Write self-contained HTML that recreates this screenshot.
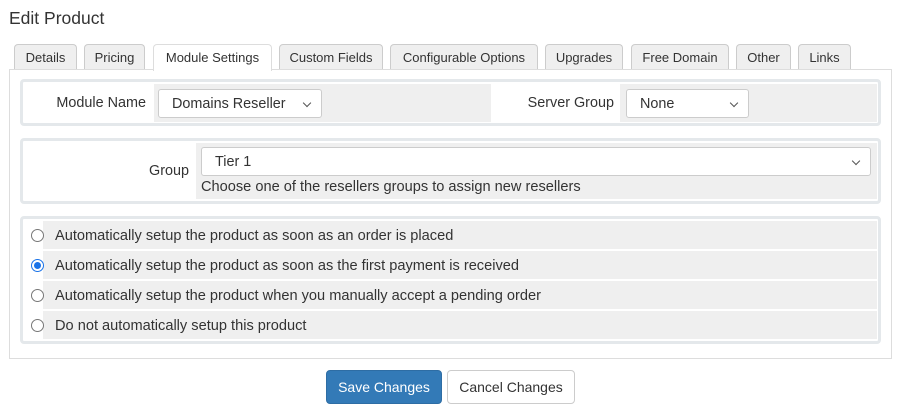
<!DOCTYPE html>
<html><head><style>
*{box-sizing:border-box}
body{margin:0;width:902px;height:417px;background:#fff;font-family:"Liberation Sans",sans-serif;font-size:14px;color:#333;position:relative;overflow:hidden}
.a{position:absolute;font-size:14.6px}
h1{position:absolute;left:9px;top:8px;margin:0;font-weight:normal;font-size:17.5px;color:#333}
.tab{position:absolute;top:44px;height:26px;background:#efefef;border:1px solid #ccc;border-bottom:none;border-radius:4px 4px 0 0;font-size:13px;text-align:center;line-height:25px;color:#333}
.tab.act{background:#fff;border-color:#ddd;height:27px;z-index:2}
.panel{position:absolute;left:9px;top:69px;width:883px;height:290px;border:1px solid #ddd}
.box{position:absolute;border:3px solid #e4e8eb;border-radius:4px;background:#fff}
.g{position:absolute;background:#efefef}
.lbl{position:absolute;text-align:right;font-size:14.4px}
.sel{position:absolute;background:#fff;border:1px solid #ccc;border-radius:3px;padding-left:13px;line-height:28px;font-size:14.4px}
.sel:after{content:"";position:absolute;right:11px;top:10px;width:5px;height:5px;border-right:1.5px solid #555;border-bottom:1.5px solid #555;transform:rotate(45deg)}
.radio{position:absolute;left:31px;width:13px;height:13px;border:1px solid #777;border-radius:50%;background:#fff}
.radio.on{border:1px solid #1a73e8}
.radio.on:after{content:"";position:absolute;left:2px;top:2px;width:7px;height:7px;border-radius:50%;background:#1a73e8}
.btn{position:absolute;top:370px;height:34px;border-radius:4px;line-height:32px;text-align:center;font-size:14px}
</style></head><body>
<h1>Edit Product</h1>
<div class="tab" style="left:14px;width:63px">Details</div>
<div class="tab" style="left:84px;width:61px">Pricing</div>
<div class="tab act" style="left:153px;width:119px">Module Settings</div>
<div class="tab" style="left:279px;width:104px">Custom Fields</div>
<div class="tab" style="left:390px;width:148px">Configurable Options</div>
<div class="tab" style="left:545px;width:78px">Upgrades</div>
<div class="tab" style="left:631px;width:98px">Free Domain</div>
<div class="tab" style="left:736px;width:55px">Other</div>
<div class="tab" style="left:798px;width:53px">Links</div>
<div class="panel"></div>

<div class="box" style="left:20px;top:79px;width:861px;height:47px"></div>
<div class="g" style="left:154px;top:84px;width:337px;height:38px"></div>
<div class="g" style="left:620px;top:84px;width:257px;height:38px"></div>
<div class="lbl" style="left:23px;width:123px;top:95px">Module Name</div>
<div class="sel" style="left:158px;top:89px;width:164px;height:29px">Domains Reseller</div>
<div class="lbl" style="left:491px;width:123px;top:95px">Server Group</div>
<div class="sel" style="left:626px;top:89px;width:123px;height:29px">None</div>

<div class="box" style="left:20px;top:138px;width:861px;height:66px"></div>
<div class="g" style="left:196px;top:143px;width:681px;height:56px"></div>
<div class="lbl" style="left:23px;width:166px;top:163px">Group</div>
<div class="sel" style="left:201px;top:147px;width:670px;height:29px">Tier 1</div>
<div class="a" style="left:201px;top:179px">Choose one of the resellers groups to assign new resellers</div>

<div class="box" style="left:20px;top:216px;width:861px;height:128px"></div>
<div class="g" style="left:43px;top:221px;width:834px;height:28px"></div>
<div class="g" style="left:43px;top:251px;width:834px;height:28px"></div>
<div class="g" style="left:43px;top:281px;width:834px;height:28px"></div>
<div class="g" style="left:43px;top:311px;width:834px;height:28px"></div>
<div class="radio" style="top:229px"></div>
<div class="radio on" style="top:259px"></div>
<div class="radio" style="top:289px"></div>
<div class="radio" style="top:319px"></div>
<div class="a" style="left:55px;top:228px">Automatically setup the product as soon as an order is placed</div>
<div class="a" style="left:55px;top:258px">Automatically setup the product as soon as the first payment is received</div>
<div class="a" style="left:55px;top:288px">Automatically setup the product when you manually accept a pending order</div>
<div class="a" style="left:55px;top:318px">Do not automatically setup this product</div>

<div class="btn" style="left:326px;width:116px;background:#337ab7;border:1px solid #2e6da4;color:#fff">Save Changes</div>
<div class="btn" style="left:447px;width:128px;background:#fff;border:1px solid #ccc;color:#333">Cancel Changes</div>
</body></html>
